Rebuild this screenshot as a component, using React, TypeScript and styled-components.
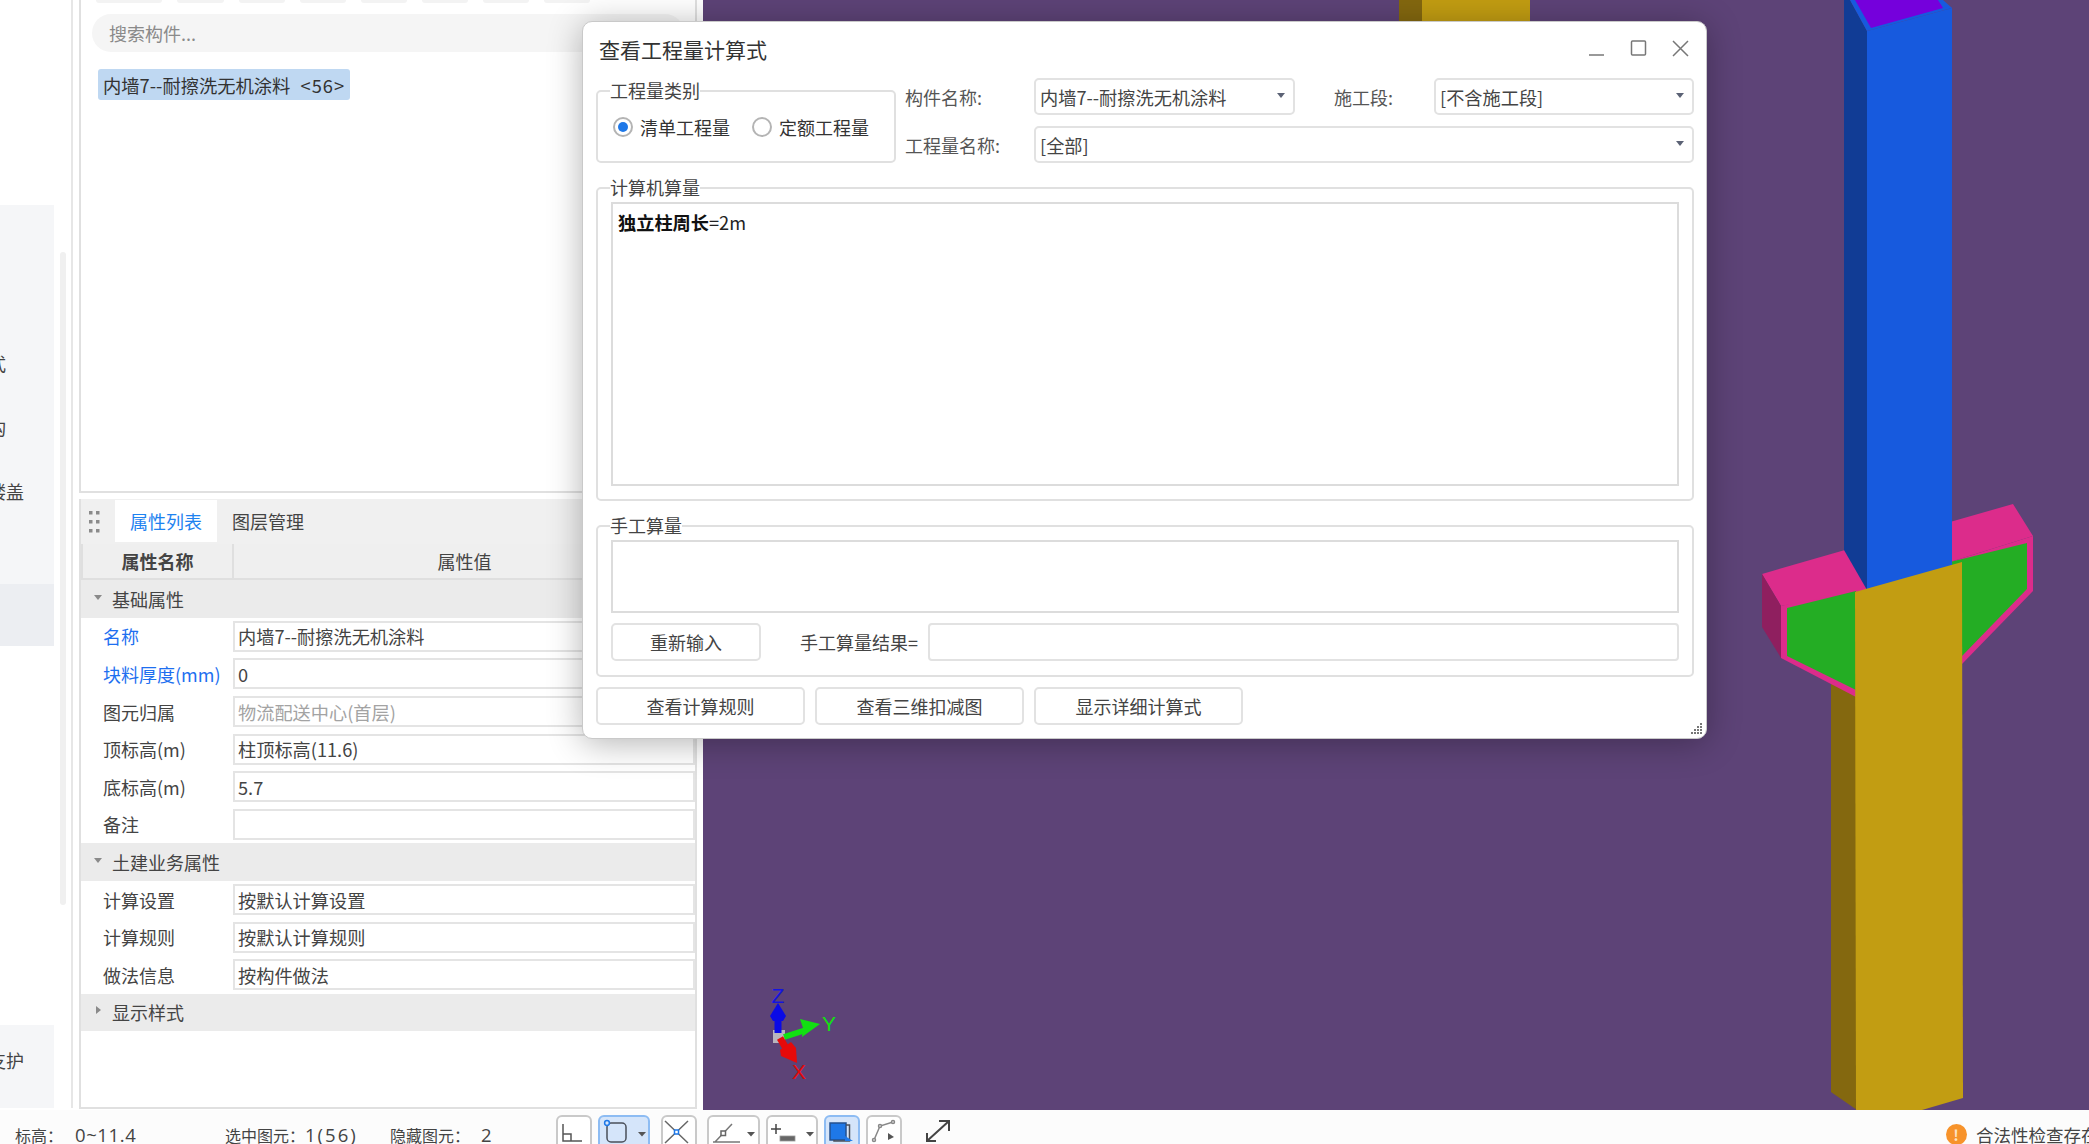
import React from "react";
import styled, { createGlobalStyle } from "styled-components";

const GlobalStyle = createGlobalStyle`
  html, body {
    margin: 0;
    padding: 0;
    width: 2089px;
    height: 1144px;
    overflow: hidden;
    background: #fff;
    font-family: "Noto Sans CJK SC", "Noto Sans", sans-serif;
    color: #333;
  }
  * { box-sizing: border-box; }
`;

const Page = styled.div`
  width: 2089px;
  height: 1144px;
  display: flex;
  flex-direction: column;
  overflow: hidden;
  position: relative;
`;

const Main = styled.div`
  height: 1110px;
  flex: none;
  display: flex;
`;

// left menu rail, only its right edge is visible
const Rail = styled.div`
  width: 73px;
  height: 1108px;
  display: flex;
  border-right: 2px solid #e6e6e6;
`;

const RailMenu = styled.div`
  width: 54px;
  display: flex;
  flex-direction: column;
  padding-top: 205px;
`;

const RailItem = styled.div<{ $h: number; $bg?: string; $end?: number; $lift?: number }>`
  height: ${(p) => p.$h}px;
  background: ${(p) => p.$bg || "#fff"};
  display: flex;
  align-items: center;
  justify-content: flex-end;
  padding-right: ${(p) => p.$end || 0}px;
  padding-bottom: ${(p) => p.$lift || 0}px;
  font-size: 18px;
  white-space: nowrap;
  overflow: hidden;
  color: #444;
`;

const RailScroll = styled.div`
  width: 6px;
  height: 653px;
  margin: 252px 0 0 6px;
  background: #f0f0f0;
  border-radius: 3px;
`;

const PanelColumn = styled.div`
  width: 618px;
  flex: none;
  margin-left: 6px;
  height: 1109px;
  display: flex;
  flex-direction: column;
  gap: 6px;
`;

const ListPanel = styled.div`
  height: 493px;
  flex: none;
  border: 2px solid #e0e0e0;
  border-top: 0;
  padding: 0 11px;
`;

const ChipRow = styled.div`
  display: flex;
  height: 3px;
  gap: 15px;
  padding-left: 4px;
`;

const Chip = styled.div<{ $w: number }>`
  width: ${(p) => p.$w}px;
  background: #f3f3f3;
  border-radius: 0 0 4px 4px;
`;

const SearchBox = styled.div`
  height: 38px;
  margin-top: 11px;
  border-radius: 19px;
  background: #f5f5f5;
  padding-left: 17px;
  display: flex;
  align-items: center;
  font-size: 18px;
  color: #8a8a8a;
`;

const SelectedItem = styled.div`
  width: 252px;
  height: 31px;
  margin: 17px 0 0 6px;
  padding-left: 5px;
  background: #bfd8f2;
  border-radius: 3px;
  display: flex;
  align-items: center;
  font-size: 18.3px;
  color: #333;
  white-space: pre;
`;

const SelectedCount = styled.span`
  letter-spacing: 1px;
  margin-left: 2px;
`;

const PropPanel = styled.div`
  flex: 1;
  border: 2px solid #e0e0e0;
  border-top: 0;
  display: flex;
  flex-direction: column;
`;

const TabBar = styled.div`
  height: 45px;
  background: #f0f0f0;
  display: flex;
  align-items: flex-start;
  flex: none;
`;

const Grip = styled.svg`
  width: 34px;
  height: 42px;
  flex: none;
`;

const Tab = styled.div<{ $active?: boolean }>`
  width: 102px;
  height: 42px;
  margin-top: 1px;
  display: flex;
  align-items: center;
  font-size: 18px;
  background: ${(p) => (p.$active ? "#fff" : "transparent")};
  color: ${(p) => (p.$active ? "#1e82f0" : "#444")};
  margin-right: ${(p) => (p.$active ? 15 : 0)}px;
  justify-content: ${(p) => (p.$active ? "center" : "flex-start")};
`;

const HeadRow = styled.div`
  height: 36px;
  flex: none;
  display: grid;
  grid-template-columns: 149px 1fr;
  background: #efefef;
  border-bottom: 2px solid #dfdfdf;
  border-left: 2px solid #dfdfdf;
`;

const HeadCell = styled.div<{ $bold?: boolean }>`
  display: flex;
  align-items: center;
  justify-content: center;
  font-size: 18px;
  font-weight: ${(p) => (p.$bold ? 700 : 400)};
  color: #444;
  & + & {
    border-left: 2px solid #dfdfdf;
  }
`;

const GroupRow = styled.div`
  height: 37.6px;
  flex: none;
  background: #ebebeb;
  display: flex;
  align-items: center;
  font-size: 18px;
  color: #444;
  padding-left: 12px;
  gap: 9px;
`;

const Caret = styled.svg`
  width: 10px;
  height: 10px;
  margin-top: -4px;
`;

const PropRow = styled.div`
  height: 37.6px;
  flex: none;
  display: grid;
  grid-template-columns: 152px 1fr;
  align-items: center;
`;

const PropLabel = styled.div<{ $blue?: boolean }>`
  padding-left: 22px;
  font-size: 18px;
  white-space: nowrap;
  color: ${(p) => (p.$blue ? "#1e6ff0" : "#444")};
`;

const PropValue = styled.div<{ $muted?: boolean }>`
  height: 31px;
  border: 2px solid #e4e4e4;
  padding-left: 3px;
  display: flex;
  align-items: center;
  font-size: 18.2px;
  background: #fff;
  color: ${(p) => (p.$muted ? "#a3a3a3" : "#444")};
`;

const Viewport = styled.div`
  flex: 1;
  margin-left: 6px;
  background: #5d4377;
  position: relative;
  overflow: hidden;
`;

const Scene = styled.svg`
  width: 1386px;
  height: 1110px;
  display: block;
`;

// floating calculation dialog
const Dialog = styled.div`
  position: absolute;
  left: 582px;
  top: 21px;
  width: 1125px;
  height: 718px;
  background: #fff;
  border-radius: 10px;
  border: 1px solid #c9c9c9;
  box-shadow: 0 4px 34px rgba(0, 0, 0, 0.3);
  padding: 0 12px 0 13px;
  display: flex;
  flex-direction: column;
  color: #444;
  font-size: 18.2px;
`;

const TitleBar = styled.div`
  height: 56px;
  flex: none;
  display: flex;
  align-items: center;
  justify-content: space-between;
`;

const Title = styled.div`
  font-size: 21px;
  padding-left: 3px;
  margin-top: -3px;
  color: #333;
`;

const WinButtons = styled.div`
  display: flex;
  gap: 25px;
  margin-right: 5px;
  margin-top: -4px;
`;

const WinIcon = styled.svg`
  width: 17px;
  height: 17px;
  display: block;
`;

const TopArea = styled.div`
  display: flex;
  height: 86px;
  flex: none;
`;

const Fieldset = styled.fieldset<{ $w?: number; $h: number; $top?: number }>`
  margin: ${(p) => p.$top || 0}px 0 0;
  border: 2px solid #e0e0e0;
  border-radius: 5px;
  padding: 0;
  height: ${(p) => p.$h}px;
  width: ${(p) => (p.$w ? `${p.$w}px` : "100%")};
  flex: none;
  min-width: 0;
`;

const Legend = styled.legend`
  margin-left: 12px;
  padding: 0 0 2px;
  font-size: 18px;
  line-height: 20px;
  color: #444;
`;

const RadioRow = styled.div`
  display: flex;
  align-items: center;
  padding: 15px 0 0 15px;
`;

const RadioOption = styled.label`
  display: flex;
  align-items: center;
  gap: 7px;
  margin-right: 22px;
  font-size: 18px;
  line-height: 20px;
  color: #333;
`;

const RadioDot = styled.span<{ $on?: boolean }>`
  width: 20px;
  height: 20px;
  border-radius: 50%;
  border: 2px solid #b4b4b4;
  background: #fff;
  display: flex;
  align-items: center;
  justify-content: center;
  &::after {
    content: "";
    width: 10px;
    height: 10px;
    border-radius: 50%;
    background: ${(p) => (p.$on ? "#1e78e8" : "transparent")};
  }
`;

const FieldGrid = styled.div`
  flex: 1;
  display: grid;
  grid-template-columns: 129px 261px 1fr 260px;
  grid-template-rows: 37px 37px;
  row-gap: 11px;
  align-items: center;
  padding-left: 9px;
`;

const FieldLabel = styled.div<{ $pad?: number }>`
  padding-left: ${(p) => p.$pad || 0}px;
  color: #555;
  font-size: 18px;
`;

const Select = styled.div<{ $wide?: boolean }>`
  height: 37px;
  border: 2px solid #e2e2e2;
  border-radius: 5px;
  display: flex;
  align-items: center;
  justify-content: space-between;
  padding: 0 8px 0 4px;
  color: #444;
  grid-column: ${(p) => (p.$wide ? "2 / span 3" : "auto")};
`;

const SelectArrow = styled.span`
  width: 0;
  height: 0;
  border-left: 4px solid transparent;
  border-right: 4px solid transparent;
  border-top: 5px solid #5b6275;
  margin-top: -2px;
`;

const GroupBody = styled.div`
  padding: 0 13px;
`;

const TextBox = styled.div<{ $h: number }>`
  height: ${(p) => p.$h}px;
  border: 2px solid #dcdcdc;
  padding: 5px 5px;
  margin-top: 3px;
  line-height: 26px;
  color: #222;
`;

const Strong = styled.b`
  font-weight: 700;
  color: #111;
`;

const ManualRow = styled.div`
  display: flex;
  align-items: center;
  margin-top: 10px;
`;

const Button = styled.div<{ $w: number }>`
  width: ${(p) => p.$w}px;
  height: 38px;
  flex: none;
  border: 2px solid #e2e2e2;
  border-radius: 5px;
  padding-bottom: 1px;
  display: flex;
  align-items: center;
  justify-content: center;
  font-size: 18px;
  color: #444;
  background: #fff;
`;

const ResultLabel = styled.div`
  margin-left: 39px;
  margin-right: 10px;
  white-space: nowrap;
  font-size: 18px;
  color: #444;
`;

const ResultInput = styled.div`
  flex: 1;
  height: 38px;
  border: 2px solid #e2e2e2;
  border-radius: 4px;
`;

const ButtonRow = styled.div`
  display: flex;
  gap: 10px;
  margin-top: 10px;
`;

const ResizeGrip = styled.svg`
  position: absolute;
  right: 3px;
  bottom: 3px;
  width: 13px;
  height: 13px;
`;

const StatusBar = styled.div`
  flex: 1;
  background: #fcfcfc;
  display: flex;
  align-items: center;
  font-size: 16px;
  color: #444;
  white-space: nowrap;
`;

const StatusText = styled.div<{ $w: number; $pad?: number }>`
  width: ${(p) => p.$w}px;
  padding-left: ${(p) => p.$pad || 0}px;
  flex: none;
  margin-top: 4px;
  display: flex;
  align-items: baseline;
`;

const StatusNum = styled.span<{ $gap?: number; $track?: number }>`
  font-family: "Open Sans", sans-serif;
  font-size: 18.5px;
  letter-spacing: ${(p) => p.$track ?? 1}px;
  margin-left: ${(p) => p.$gap || 0}px;
`;

const Tools = styled.div`
  display: flex;
  gap: 6px;
  align-items: flex-start;
  align-self: flex-start;
  margin-top: 5px;
`;

const ToolButton = styled.div<{ $w: number; $on?: boolean; $gap?: number }>`
  width: ${(p) => p.$w}px;
  height: 40px;
  margin-left: ${(p) => p.$gap || 0}px;
  flex: none;
  border: 2px solid ${(p) => (p.$on ? "#8dbcf3" : "#c9c9c9")};
  border-radius: 6px;
  background: ${(p) => (p.$on ? "#d5e5fa" : "#fff")};
  svg {
    display: block;
  }
`;

const ExpandIcon = styled.svg`
  width: 26px;
  height: 26px;
  align-self: flex-start;
  margin: 9px 0 0 23px;
  flex: none;
`;

const Notice = styled.div`
  margin-left: auto;
  width: 143.5px;
  flex: none;
  overflow: hidden;
  display: flex;
  align-items: center;
  gap: 9.5px;
  margin-top: 3px;
  font-size: 17.5px;
`;

const NoticeDot = styled.span`
  width: 21px;
  height: 21px;
  flex: none;
  border-radius: 50%;
  background: #f7932b;
  color: #fde3c4;
  font-size: 15px;
  font-weight: 700;
  display: flex;
  align-items: center;
  justify-content: center;
`;

const chipWidths = [66, 47, 46, 46, 46, 46, 46, 46];

const baseRows = [
  { label: "名称", value: "内墙7--耐擦洗无机涂料", blue: true },
  { label: "块料厚度(mm)", value: "0", blue: true },
  { label: "图元归属", value: "物流配送中心(首层)", muted: true },
  { label: "顶标高(m)", value: "柱顶标高(11.6)" },
  { label: "底标高(m)", value: "5.7" },
  { label: "备注", value: "" },
];

const civilRows = [
  { label: "计算设置", value: "按默认计算设置" },
  { label: "计算规则", value: "按默认计算规则" },
  { label: "做法信息", value: "按构件做法" },
];

// x/y below are page pixels, viewport starts at x=703
const poly = (pts: number[][]) => pts.map(([x, y]) => `${x - 703},${y}`).join(" ");

const Column3D = () => (
  <>
    {/* upper stub hidden behind the dialog */}
    <polygon points={poly([[1399, 0], [1422, 0], [1422, 30], [1399, 30]])} fill="#84680f" />
    <polygon points={poly([[1422, 0], [1530, 0], [1530, 30], [1422, 30]])} fill="#c29d12" />

    {/* lower column, back side */}
    <polygon points={poly([[1831, 680], [1857, 680], [1857, 1110], [1831, 1092]])} fill="#84680f" />

    {/* left bracket */}
    <polygon points={poly([[1781, 606], [1856, 587], [1856, 697], [1781, 658]])} fill="#dc2c8b" />
    <polygon points={poly([[1762, 574], [1845, 550], [1868, 582], [1868, 590], [1781, 606]])} fill="#dc2c8b" />
    <polygon points={poly([[1762, 574], [1781, 606], [1781, 658], [1762, 627]])} fill="#8f1f5f" />
    <polygon points={poly([[1787, 608], [1856, 591], [1856, 690], [1787, 656]])} fill="#24ad24" />

    {/* right bracket */}
    <polygon points={poly([[1950, 522], [2013, 504], [2033, 536], [1950, 562]])} fill="#dc2c8b" />
    <polygon points={poly([[1950, 562], [2033, 536], [2033, 591], [1962, 664]])} fill="#dc2c8b" />
    <polygon points={poly([[1950, 562], [2027, 543], [2027, 589], [1962, 656]])} fill="#24ad24" />

    {/* blue column */}
    <polygon points={poly([[1844, 0], [1850, 0], [1867, 31], [1867, 590], [1844, 550]])} fill="#113c95" />
    <polygon points={poly([[1867, 31], [1952, 8], [1952, 567], [1867, 590]])} fill="#175ade" />
    <polygon points={poly([[1850, 0], [1943, 0], [1952, 8], [1867, 31]])} fill="#175ade" />
    <polygon points={poly([[1855, 0], [1938, 0], [1943, 8], [1871, 28]])} fill="#7500dc" />

    {/* lower column, front */}
    <polygon
      points={poly([[1855, 592], [1962, 562], [1963, 1098], [1922, 1110], [1856, 1110]])}
      fill="#c29d12"
    />
  </>
);

const AxisGizmo = () => (
  <g transform="translate(-703 0)">
    <rect x="773" y="1030" width="12" height="13" fill="#b9b5bd" />
    <path d="M778 1033V1014" stroke="#0a0ae6" strokeWidth="7" />
    <path d="M778 1003l8 13-3 5h-10l-3-5z" fill="#0a0ae6" />
    <path d="M784 1037L806 1030" stroke="#12e012" strokeWidth="6" />
    <path d="M820 1024l-20-5 3 9-1 9z" fill="#12e012" />
    <path d="M780 1038L787 1050" stroke="#e60a0a" strokeWidth="7" />
    <path d="M797 1063l-16-7-1-6 11-8 5 6z" fill="#e60a0a" />
    <text x="778" y="1003" fontSize="21" fill="#1414e0" textAnchor="middle" fontFamily="Liberation Sans, sans-serif">Z</text>
    <text x="829" y="1031" fontSize="21" fill="#12e012" textAnchor="middle" fontFamily="Liberation Sans, sans-serif">Y</text>
    <text x="799" y="1079" fontSize="21" fill="#e60a0a" textAnchor="middle" fontFamily="Liberation Sans, sans-serif">X</text>
  </g>
);

const ToolIcon = ({ w, children }: { w: number; children: React.ReactNode }) => (
  <svg width={w} height="36" viewBox={`0 0 ${w} 36`} fill="none" stroke="#666" strokeWidth="1.5">
    {children}
  </svg>
);

const DropMark = ({ x }: { x: number }) => <path d={`M${x} 15h8l-4 4.5z`} fill="#555" stroke="none" />;

export default function App() {
  return (
    <>
      <GlobalStyle />
      <Page>
        <Main>
          <Rail>
            <RailMenu>
              <RailItem $h={126} $bg="#f5f6f8" />
              <RailItem $h={64} $bg="#f5f6f8" $end={48}>样式</RailItem>
              <RailItem $h={64} $bg="#f5f6f8" $end={48}>结构</RailItem>
              <RailItem $h={64} $bg="#f5f6f8" $end={30}>楼盖</RailItem>
              <RailItem $h={61} $bg="#f5f6f8" />
              <RailItem $h={62} $bg="#eceef2" />
              <RailItem $h={379} />
              <RailItem $h={83} $bg="#f5f6f8" $end={30} $lift={14}>支护</RailItem>
            </RailMenu>
            <RailScroll />
          </Rail>

          <PanelColumn>
            <ListPanel>
              <ChipRow>
                {chipWidths.map((w, i) => (
                  <Chip key={i} $w={w} />
                ))}
              </ChipRow>
              <SearchBox>搜索构件...</SearchBox>
              <SelectedItem>内墙7--耐擦洗无机涂料  <SelectedCount>{"<56>"}</SelectedCount></SelectedItem>
            </ListPanel>

            <PropPanel>
              <TabBar>
                <Grip viewBox="0 0 34 42">
                  {[12, 21, 30].map((y) => (
                    <g key={y} fill="#8a8a8a">
                      <rect x="8" y={y} width="3.5" height="3.5" />
                      <rect x="15" y={y} width="3.5" height="3.5" />
                    </g>
                  ))}
                </Grip>
                <Tab $active>属性列表</Tab>
                <Tab>图层管理</Tab>
              </TabBar>
              <HeadRow>
                <HeadCell $bold>属性名称</HeadCell>
                <HeadCell>属性值</HeadCell>
              </HeadRow>
              <GroupRow>
                <Caret viewBox="0 0 10 10"><path d="M1 3h8L5 8z" fill="#8a8a8a" /></Caret>
                基础属性
              </GroupRow>
              {baseRows.map((r) => (
                <PropRow key={r.label}>
                  <PropLabel $blue={r.blue}>{r.label}</PropLabel>
                  <PropValue $muted={r.muted}>{r.value}</PropValue>
                </PropRow>
              ))}
              <GroupRow>
                <Caret viewBox="0 0 10 10"><path d="M1 3h8L5 8z" fill="#8a8a8a" /></Caret>
                土建业务属性
              </GroupRow>
              {civilRows.map((r) => (
                <PropRow key={r.label}>
                  <PropLabel>{r.label}</PropLabel>
                  <PropValue>{r.value}</PropValue>
                </PropRow>
              ))}
              <GroupRow>
                <Caret viewBox="0 0 10 10"><path d="M3 1v8l5-4z" fill="#8a8a8a" /></Caret>
                显示样式
              </GroupRow>
            </PropPanel>
          </PanelColumn>

          <Viewport>
            <Scene viewBox="0 0 1386 1110">
              <Column3D />
              <AxisGizmo />
            </Scene>
          </Viewport>
        </Main>

        <Dialog>
          <TitleBar>
            <Title>查看工程量计算式</Title>
            <WinButtons>
              <WinIcon viewBox="0 0 17 17" fill="none" stroke="#777" strokeWidth="1.5"><path d="M1 15h15" /></WinIcon>
              <WinIcon viewBox="0 0 17 17" fill="none" stroke="#777" strokeWidth="1.5"><rect x="1.5" y="1" width="14" height="14" rx="1" /></WinIcon>
              <WinIcon viewBox="0 0 17 17" fill="none" stroke="#777" strokeWidth="1.5"><path d="M1 1l15 15M16 1L1 16" /></WinIcon>
            </WinButtons>
          </TitleBar>

          <TopArea>
            <Fieldset $w={300} $h={83} $top={2}>
              <Legend>工程量类别</Legend>
              <RadioRow>
                <RadioOption><RadioDot $on />清单工程量</RadioOption>
                <RadioOption><RadioDot />定额工程量</RadioOption>
              </RadioRow>
            </Fieldset>
            <FieldGrid>
              <FieldLabel>构件名称:</FieldLabel>
              <Select>内墙7--耐擦洗无机涂料<SelectArrow /></Select>
              <FieldLabel $pad={39}>施工段:</FieldLabel>
              <Select>[不含施工段]<SelectArrow /></Select>
              <FieldLabel>工程量名称:</FieldLabel>
              <Select $wide>[全部]<SelectArrow /></Select>
            </FieldGrid>
          </TopArea>

          <Fieldset $h={324} $top={13}>
            <Legend>计算机算量</Legend>
            <GroupBody>
              <TextBox $h={284}>
                <Strong>独立柱周长</Strong>=2m
              </TextBox>
            </GroupBody>
          </Fieldset>

          <Fieldset $h={162} $top={14}>
            <Legend>手工算量</Legend>
            <GroupBody>
              <TextBox $h={73} />
              <ManualRow>
                <Button $w={150}>重新输入</Button>
                <ResultLabel>手工算量结果=</ResultLabel>
                <ResultInput />
              </ManualRow>
            </GroupBody>
          </Fieldset>

          <ButtonRow>
            <Button $w={209}>查看计算规则</Button>
            <Button $w={209}>查看三维扣减图</Button>
            <Button $w={209}>显示详细计算式</Button>
          </ButtonRow>

          <ResizeGrip viewBox="0 0 13 13" fill="#777">
            {[[10, 1], [7, 4], [10, 4], [4, 7], [7, 7], [10, 7], [1, 10], [4, 10], [7, 10], [10, 10]].map(([x, y]) => (
              <rect key={`${x}-${y}`} x={x} y={y} width="2" height="2" />
            ))}
          </ResizeGrip>
        </Dialog>

        <StatusBar>
          <StatusText $w={225} $pad={15}>标高：<StatusNum $gap={12} $track={0.6}>0~11.4</StatusNum></StatusText>
          <StatusText $w={165}>选中图元：<StatusNum $track={2}>1(56)</StatusNum></StatusText>
          <StatusText $w={166}>隐藏图元：<StatusNum $gap={11}>2</StatusNum></StatusText>
          <Tools>
            <ToolButton $w={36}>
              <ToolIcon w={32}>
                <path d="M5 7v17h19M5 17h8v7" stroke="#555" />
              </ToolIcon>
            </ToolButton>
            <ToolButton $w={52} $on>
              <ToolIcon w={48}>
                <rect x="7" y="6" width="19" height="19" rx="4" stroke="#4a4f5a" />
                <circle cx="7" cy="6" r="2.4" fill="#d5e5fa" stroke="#1e78e8" />
                <DropMark x={38} />
              </ToolIcon>
            </ToolButton>
            <ToolButton $w={36} $gap={5}>
              <ToolIcon w={32}>
                <path d="M2 4l23 22M25 4L2 26" />
                <rect x="11.5" y="13" width="4" height="4" fill="#fff" stroke="#1e78e8" />
              </ToolIcon>
            </ToolButton>
            <ToolButton $w={53} $gap={4}>
              <ToolIcon w={49}>
                <path d="M4 25h27M6 25L23 7" stroke="#777" />
                <rect x="12" y="14" width="4.5" height="4.5" fill="#fff" stroke="#666" />
                <DropMark x={38} />
              </ToolIcon>
            </ToolButton>
            <ToolButton $w={52}>
              <ToolIcon w={48}>
                <path d="M3 12h10M8 7v10" stroke="#444" />
                <rect x="12" y="19" width="15" height="5" fill="#666" stroke="#999" strokeWidth="0.8" />
                <DropMark x={38} />
              </ToolIcon>
            </ToolButton>
            <ToolButton $w={36} $on>
              <ToolIcon w={32}>
                <rect x="4" y="6" width="16" height="17" fill="#1e78e8" stroke="#23508f" />
                <path d="M20 8h3.5v16H8v-1" stroke="#4a4f5a" />
                <path d="M19 19l8 5h-8z" fill="#1e78e8" stroke="none" />
              </ToolIcon>
            </ToolButton>
            <ToolButton $w={36}>
              <ToolIcon w={32}>
                <path d="M6 23l6-14 13-4" stroke="#888" />
                <circle cx="6" cy="23" r="1.5" fill="#fff" stroke="#888" />
                <circle cx="12" cy="9" r="1.5" fill="#fff" stroke="#888" />
                <circle cx="25" cy="5" r="1.5" fill="#fff" stroke="#888" />
                <path d="M20 16l6 4-6 3z" fill="#555" stroke="none" />
              </ToolIcon>
            </ToolButton>
          </Tools>
          <ExpandIcon viewBox="0 0 26 26" fill="none" stroke="#444" strokeWidth="2">
            <path d="M2 22L24 2M14 2h10v10M2 14v8h9" />
          </ExpandIcon>
          <Notice>
            <NoticeDot>!</NoticeDot>
            合法性检查存在问题
          </Notice>
        </StatusBar>
      </Page>
    </>
  );
}
